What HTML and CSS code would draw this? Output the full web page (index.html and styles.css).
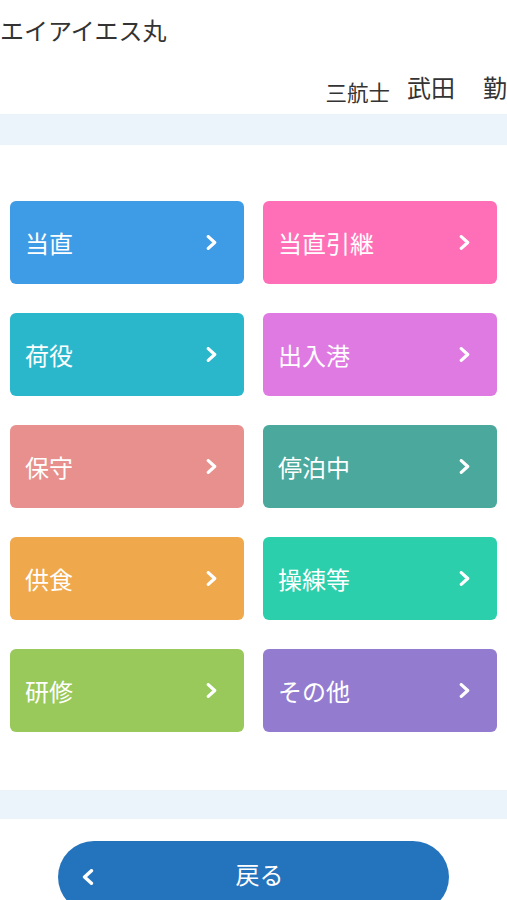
FILE: index.html
```html
<!DOCTYPE html>
<html lang="ja">
<head>
    <meta charset="UTF-8">
    <meta name="viewport" content="width=device-width, initial-scale=1.0">
    <title>作業選択</title>
    <link rel="stylesheet" href="styles.css">
</head>
<body>

    <div class="ship-name">エイアイエス丸</div>
    <div class="staff">
        <span class="rank">三航士</span>
        <span class="person"><span>武田</span><span>勤</span></span>
    </div>
    <div class="band"></div>

    <div class="menu">
        <a class="tile c-blue" href="#"><span>当直</span><svg viewBox="0 0 10 14"><polyline points="2,1.5 8,7 2,12.5"/></svg></a>
        <a class="tile c-pink" href="#"><span>当直引継</span><svg viewBox="0 0 10 14"><polyline points="2,1.5 8,7 2,12.5"/></svg></a>
        <a class="tile c-cyan" href="#"><span>荷役</span><svg viewBox="0 0 10 14"><polyline points="2,1.5 8,7 2,12.5"/></svg></a>
        <a class="tile c-violet" href="#"><span>出入港</span><svg viewBox="0 0 10 14"><polyline points="2,1.5 8,7 2,12.5"/></svg></a>
        <a class="tile c-salmon" href="#"><span>保守</span><svg viewBox="0 0 10 14"><polyline points="2,1.5 8,7 2,12.5"/></svg></a>
        <a class="tile c-sea" href="#"><span>停泊中</span><svg viewBox="0 0 10 14"><polyline points="2,1.5 8,7 2,12.5"/></svg></a>
        <a class="tile c-orange" href="#"><span>供食</span><svg viewBox="0 0 10 14"><polyline points="2,1.5 8,7 2,12.5"/></svg></a>
        <a class="tile c-mint" href="#"><span>操練等</span><svg viewBox="0 0 10 14"><polyline points="2,1.5 8,7 2,12.5"/></svg></a>
        <a class="tile c-lime" href="#"><span>研修</span><svg viewBox="0 0 10 14"><polyline points="2,1.5 8,7 2,12.5"/></svg></a>
        <a class="tile c-purple" href="#"><span>その他</span><svg viewBox="0 0 10 14"><polyline points="2,1.5 8,7 2,12.5"/></svg></a>
    </div>

    <div class="band band-bottom"></div>

    <div class="footer">
        <a class="back" href="#">
            <svg viewBox="0 0 10 14"><polyline points="8,1.5 2,7 8,12.5"/></svg>
            <span>戻る</span>
        </a>
    </div>

</body>
</html>
```

FILE: styles.css
```css
body {
    margin: 0;
    font-family: "Noto Sans CJK JP", "Noto Sans", sans-serif;
    background-color: #fff;
    color: #333;
    overflow: hidden;
}

.ship-name {
    height: 60px;
    line-height: 60px;
    font-size: 24px;
    white-space: nowrap;
}

.staff {
    height: 54px;
    display: flex;
    justify-content: flex-end;
    align-items: flex-start;
    gap: 17px;
    white-space: nowrap;
}

.rank {
    font-size: 21.5px;
    line-height: 24px;
    margin-top: 20px;
}

.person {
    display: flex;
    gap: 28px;
    font-size: 24px;
    line-height: 26px;
    margin-top: 14px;
}

.band {
    height: 31px;
    background-color: #ebf3fb;
}

.band-bottom {
    height: 29px;
}

.menu {
    display: grid;
    grid-template-columns: 234px 234px;
    column-gap: 19px;
    row-gap: 29px;
    padding: 56px 10px 58px;
}

.tile {
    height: 83px;
    border-radius: 6px;
    display: flex;
    align-items: center;
    justify-content: space-between;
    padding: 0 27px 0 15px;
    color: #fff;
    font-size: 24px;
    text-decoration: none;
}

.tile svg,
.back svg {
    width: 11px;
    height: 15px;
    fill: none;
    stroke: #fff;
    stroke-width: 3;
    stroke-linecap: round;
    stroke-linejoin: round;
}

.c-blue { background-color: #3e9be6; }
.c-pink { background-color: #ff6fb8; }
.c-cyan { background-color: #2bb7cb; }
.c-violet { background-color: #e07ae3; }
.c-salmon { background-color: #e8908d; }
.c-sea { background-color: #4aa89d; }
.c-orange { background-color: #f0a84d; }
.c-mint { background-color: #2bcfab; }
.c-lime { background-color: #98c95a; }
.c-purple { background-color: #937ccf; }

.footer {
    padding: 22px 58px 0;
}

.back {
    position: relative;
    display: flex;
    align-items: center;
    justify-content: center;
    height: 72px;
    border-radius: 36px;
    background-color: #2474bd;
    color: #fff;
    font-size: 24px;
    text-decoration: none;
    margin-bottom: -12px;
}

.back span {
    margin-top: -8px;
    margin-left: 12px;
}

.back svg {
    position: absolute;
    left: 24px;
    top: 28px;
    width: 12px;
    height: 16px;
}
```
